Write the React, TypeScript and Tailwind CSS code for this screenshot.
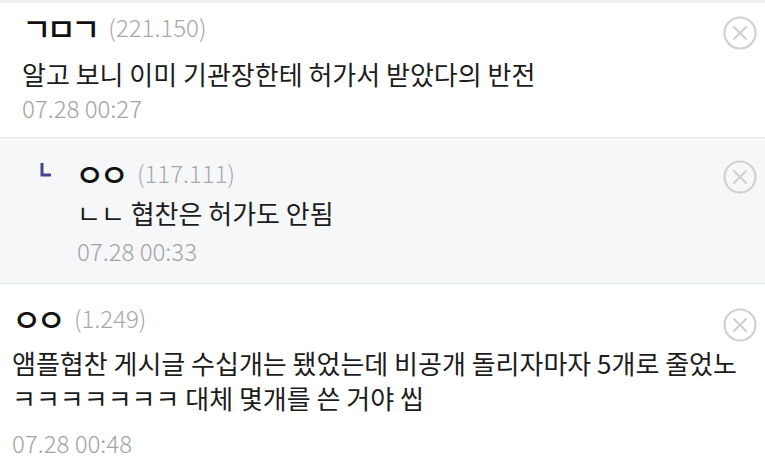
import React from "react";

const font = "font-['Noto_Sans_CJK_KR','Noto_Sans',sans-serif]";

const DeleteIcon = ({ className = "" }: { className?: string }) => (
  <svg width="34" height="34" viewBox="0 0 34 34" className={className}>
    <circle cx="17" cy="17" r="15.5" fill="none" stroke="#d0d0d0" strokeWidth="2.2" />
    <path d="M11 11 L23 23 M23 11 L11 23" stroke="#d0d0d0" strokeWidth="2.2" strokeLinecap="round" />
  </svg>
);

const Nick = ({ children }: { children: React.ReactNode }) => (
  <span className="text-[32px] leading-none tracking-[-5px] font-medium text-[#111]">{children}</span>
);

const Ip = ({ children }: { children: React.ReactNode }) => (
  <span className="ml-[13px] text-[24px] font-light text-[#a8a8a8]">{children}</span>
);

const App = () => {
  return (
    <div className={`w-[765px] h-[465px] overflow-hidden bg-white ${font} text-[#1c1c1c]`}>
      <div className="h-[3px] bg-[#efefef]" />

      {/* first comment */}
      <div className="flex border-b border-[#e6e6e6] pl-[22px] pr-[8px] pt-[9px] pb-[15px]">
        <div className="flex-1">
          <div className="flex items-center h-[30px]">
            <Nick>ㄱㅁㄱ</Nick>
            <Ip>(221.150)</Ip>
          </div>
          <p className="mt-[14px] h-[36px] leading-[36px] text-[26px]">
            알고 보니 이미 기관장한테 허가서 받았다의 반전
          </p>
          <p className="mt-[2px] h-[28px] leading-[28px] text-[24px] font-light text-[#a3a3a3]">
            07.28 00:27
          </p>
        </div>
        <DeleteIcon className="mt-[4px]" />
      </div>

      {/* reply */}
      <div className="flex bg-[#f6f7f9] border-b border-[#e3e6ea] pl-[40px] pr-[8px] pt-[20px] pb-[18px]">
        <svg width="12" height="14" viewBox="0 0 12 14" className="mt-[5px] mr-[23px] shrink-0">
          <path d="M2 0 V12 H11" fill="none" stroke="#45478a" strokeWidth="3" />
        </svg>
        <div className="flex-1">
          <div className="flex items-center h-[30px]">
            <Nick>ㅇㅇ</Nick>
            <Ip>(117.111)</Ip>
          </div>
          <p className="mt-[7px] h-[36px] leading-[36px] text-[26px] pl-[2px]">ㄴㄴ 협찬은 허가도 안됨</p>
          <p className="mt-[6px] h-[28px] leading-[28px] text-[24px] font-light text-[#a3a3a3] pl-[2px]">
            07.28 00:33
          </p>
        </div>
        <DeleteIcon className="mt-[2px]" />
      </div>

      {/* third comment */}
      <div className="flex pl-[12px] pr-[8px] pt-[19px]">
        <div className="flex-1">
          <div className="flex items-center h-[30px]">
            <Nick>ㅇㅇ</Nick>
            <Ip>(1.249)</Ip>
          </div>
          <p className="mt-[12px] leading-[35px] text-[26px] whitespace-nowrap">
            앰플협찬 게시글 수십개는 됐었는데 비공개 돌리자마자 5개로 줄었노
            <br />
            ㅋㅋㅋㅋㅋㅋㅋ 대체 몇개를 쓴 거야 씹
          </p>
          <p className="mt-[14px] h-[28px] leading-[28px] text-[24px] font-light text-[#a3a3a3]">
            07.28 00:48
          </p>
        </div>
        <DeleteIcon className="mt-[5px] -ml-[34px]" />
      </div>
    </div>
  );
};

export default App;
